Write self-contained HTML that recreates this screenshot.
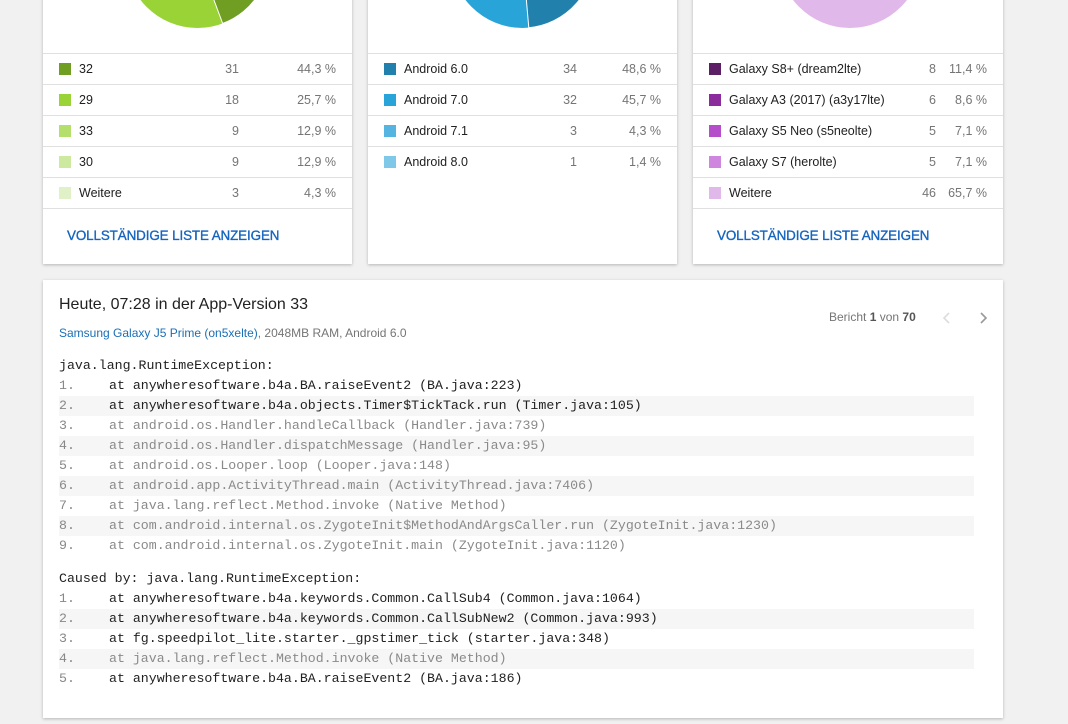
<!DOCTYPE html>
<html><head><meta charset="utf-8"><style>
*{margin:0;padding:0;box-sizing:border-box}
body{width:1068px;height:724px;background:#f1f1f1;position:relative;overflow:hidden;font-family:"Liberation Sans",sans-serif;color:#212121}
.card{position:absolute;background:#fff;box-shadow:0 1px 3px rgba(0,0,0,.25)}
.top{top:-20px;height:284px;width:309px}
.pie{position:absolute;left:0;top:20px}
.rows{position:absolute;left:0;right:0;top:73px;border-top:1px solid #e0e0e0}
.row{height:31px;border-bottom:1px solid #e0e0e0;position:relative;font-size:12.5px;line-height:30px}
.sw{position:absolute;left:16px;top:9px;width:12px;height:12px}
.lb{position:absolute;left:36px}
.ct{position:absolute;color:#757575;text-align:right}
.pc{position:absolute;right:16px;color:#757575}
.btn{position:absolute;left:24px;top:248px;color:#1565c0;font-size:13.4px;-webkit-text-stroke:0.35px #1565c0;letter-spacing:-0.1px}
.code{position:absolute;left:16px;width:915px;font-family:"Liberation Mono",monospace;font-size:13.25px}
.code div{height:20px;line-height:20px;white-space:pre;position:relative}
.code .s{background:#f6f6f6}
.code .n{color:#888;position:absolute;left:0}
.code .t{position:absolute;left:50px}
.g{color:#8a8a8a}
</style></head><body>

<div class="card top" style="left:43px">
<svg class="pie" width="309" height="60"><circle cx="154.5" cy="-44" r="72" fill="#9ad336"/><path d="M154.5 -44 L154.5 -116 A72 72 0 0 1 179.7 23.5 Z" fill="#6f9e23" stroke="#fff" stroke-width="1"/></svg>
<div class="rows">
<div class="row"><span class="sw" style="background:#6f9e23"></span><span class="lb">32</span><span class="ct" style="right:113px">31</span><span class="pc">44,3 %</span></div>
<div class="row"><span class="sw" style="background:#9ad336"></span><span class="lb">29</span><span class="ct" style="right:113px">18</span><span class="pc">25,7 %</span></div>
<div class="row"><span class="sw" style="background:#b5df6c"></span><span class="lb">33</span><span class="ct" style="right:113px">9</span><span class="pc">12,9 %</span></div>
<div class="row"><span class="sw" style="background:#cde9a0"></span><span class="lb">30</span><span class="ct" style="right:113px">9</span><span class="pc">12,9 %</span></div>
<div class="row"><span class="sw" style="background:#e0f1c8"></span><span class="lb">Weitere</span><span class="ct" style="right:113px">3</span><span class="pc">4,3 %</span></div>
</div>
<div class="btn">VOLLSTÄNDIGE LISTE ANZEIGEN</div>
</div>

<div class="card top" style="left:368px">
<svg class="pie" width="309" height="60"><circle cx="154.5" cy="-44" r="72" fill="#29a4d9"/><path d="M154.5 -44 L154.5 -116 A72 72 0 0 1 160.8 27.7 Z" fill="#2280ad" stroke="#fff" stroke-width="1"/></svg>
<div class="rows">
<div class="row"><span class="sw" style="background:#2280ad"></span><span class="lb">Android 6.0</span><span class="ct" style="right:100px">34</span><span class="pc">48,6 %</span></div>
<div class="row"><span class="sw" style="background:#29a4d9"></span><span class="lb">Android 7.0</span><span class="ct" style="right:100px">32</span><span class="pc">45,7 %</span></div>
<div class="row"><span class="sw" style="background:#55b5e0"></span><span class="lb">Android 7.1</span><span class="ct" style="right:100px">3</span><span class="pc">4,3 %</span></div>
<div class="row" style="border-bottom:none"><span class="sw" style="background:#7fc8e8"></span><span class="lb">Android 8.0</span><span class="ct" style="right:100px">1</span><span class="pc">1,4 %</span></div>
</div>
</div>

<div class="card top" style="left:693px;width:310px">
<svg class="pie" width="310" height="60"><circle cx="157" cy="-44" r="72" fill="#e1b8ea"/></svg>
<div class="rows">
<div class="row"><span class="sw" style="background:#5c1f66"></span><span class="lb">Galaxy S8+ (dream2lte)</span><span class="ct" style="right:67px">8</span><span class="pc">11,4 %</span></div>
<div class="row"><span class="sw" style="background:#8c2c9c"></span><span class="lb">Galaxy A3 (2017) (a3y17lte)</span><span class="ct" style="right:67px">6</span><span class="pc">8,6 %</span></div>
<div class="row"><span class="sw" style="background:#b54ecb"></span><span class="lb">Galaxy S5 Neo (s5neolte)</span><span class="ct" style="right:67px">5</span><span class="pc">7,1 %</span></div>
<div class="row"><span class="sw" style="background:#cf86de"></span><span class="lb">Galaxy S7 (herolte)</span><span class="ct" style="right:67px">5</span><span class="pc">7,1 %</span></div>
<div class="row"><span class="sw" style="background:#e1b8ea"></span><span class="lb">Weitere</span><span class="ct" style="right:67px">46</span><span class="pc">65,7 %</span></div>
</div>
<div class="btn">VOLLSTÄNDIGE LISTE ANZEIGEN</div>
</div>

<div class="card" style="left:43px;top:280px;width:960px;height:438px">
<div style="position:absolute;left:16px;top:16px;font-size:16px;color:#212121">Heute, 07:28 in der App-Version 33</div>
<div style="position:absolute;left:16px;top:46px;font-size:12px;color:#757575"><span style="color:#1a6fb5">Samsung Galaxy J5 Prime (on5xelte)</span>, 2048MB RAM, Android 6.0</div>
<div style="position:absolute;left:786px;top:30px;font-size:12px;color:#757575">Bericht <b style="color:#555">1</b> von <b style="color:#555">70</b></div>
<svg style="position:absolute;left:899px;top:31px" width="10" height="14"><path d="M7 2 L2 7 L7 12" fill="none" stroke="#ddd" stroke-width="1.6"/></svg>
<svg style="position:absolute;left:935px;top:31px" width="10" height="14"><path d="M3 2 L8 7 L3 12" fill="none" stroke="#999" stroke-width="1.6"/></svg>

<div class="code" style="top:76px">
<div>java.lang.RuntimeException:</div>
<div><span class="n">1.</span><span class="t">at anywheresoftware.b4a.BA.raiseEvent2 (BA.java:223)</span></div>
<div class="s"><span class="n">2.</span><span class="t">at anywheresoftware.b4a.objects.Timer$TickTack.run (Timer.java:105)</span></div>
<div class="g"><span class="n">3.</span><span class="t">at android.os.Handler.handleCallback (Handler.java:739)</span></div>
<div class="s g"><span class="n">4.</span><span class="t">at android.os.Handler.dispatchMessage (Handler.java:95)</span></div>
<div class="g"><span class="n">5.</span><span class="t">at android.os.Looper.loop (Looper.java:148)</span></div>
<div class="s g"><span class="n">6.</span><span class="t">at android.app.ActivityThread.main (ActivityThread.java:7406)</span></div>
<div class="g"><span class="n">7.</span><span class="t">at java.lang.reflect.Method.invoke (Native Method)</span></div>
<div class="s g"><span class="n">8.</span><span class="t">at com.android.internal.os.ZygoteInit$MethodAndArgsCaller.run (ZygoteInit.java:1230)</span></div>
<div class="g"><span class="n">9.</span><span class="t">at com.android.internal.os.ZygoteInit.main (ZygoteInit.java:1120)</span></div>
</div>

<div class="code" style="top:289px">
<div>Caused by: java.lang.RuntimeException:</div>
<div><span class="n">1.</span><span class="t">at anywheresoftware.b4a.keywords.Common.CallSub4 (Common.java:1064)</span></div>
<div class="s"><span class="n">2.</span><span class="t">at anywheresoftware.b4a.keywords.Common.CallSubNew2 (Common.java:993)</span></div>
<div><span class="n">3.</span><span class="t">at fg.speedpilot_lite.starter._gpstimer_tick (starter.java:348)</span></div>
<div class="s g"><span class="n">4.</span><span class="t">at java.lang.reflect.Method.invoke (Native Method)</span></div>
<div><span class="n">5.</span><span class="t">at anywheresoftware.b4a.BA.raiseEvent2 (BA.java:186)</span></div>
</div>
</div>
</body></html>
